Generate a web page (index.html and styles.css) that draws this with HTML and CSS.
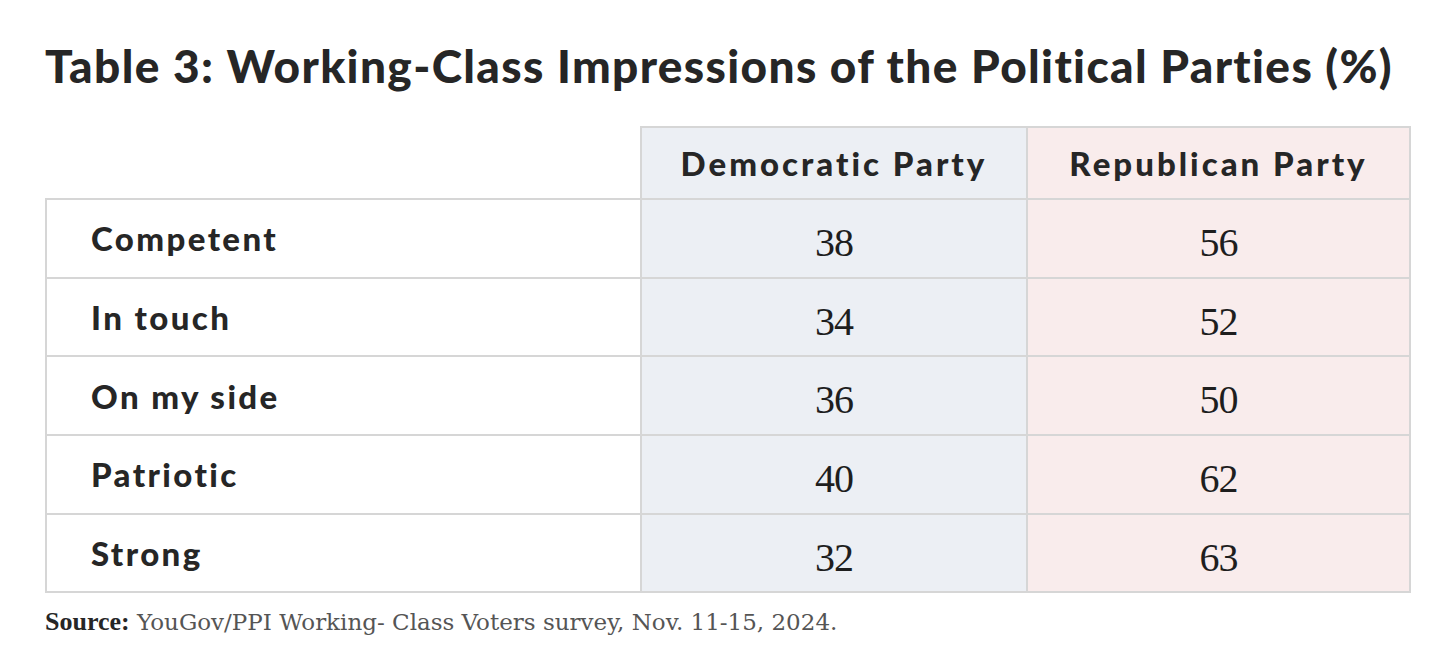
FILE: index.html
```html
<!DOCTYPE html>
<html lang="en">
<head>
<meta charset="utf-8">
<title>Table 3</title>
<link rel="stylesheet" href="styles.css">
</head>
<body>
<div class="page">
  <h1 class="title">Table 3: Working-Class Impressions of the Political Parties (%)</h1>
  <table class="data">
    <thead>
      <tr>
        <th class="blank"></th>
        <th class="dem">Democratic Party</th>
        <th class="rep">Republican Party</th>
      </tr>
    </thead>
    <tbody>
      <tr><th class="label">Competent</th><td class="dem">38</td><td class="rep">56</td></tr>
      <tr><th class="label">In touch</th><td class="dem">34</td><td class="rep">52</td></tr>
      <tr><th class="label">On my side</th><td class="dem">36</td><td class="rep">50</td></tr>
      <tr><th class="label">Patriotic</th><td class="dem">40</td><td class="rep">62</td></tr>
      <tr><th class="label">Strong</th><td class="dem">32</td><td class="rep">63</td></tr>
    </tbody>
  </table>
  <p class="source"><strong>Source:</strong> YouGov/PPI Working- Class Voters survey, Nov. 11-15, 2024.</p>
</div>
</body>
</html>
```
FILE: styles.css
```css
html, body {
  margin: 0;
  padding: 0;
  background: #ffffff;
}
.page {
  padding: 38px 45px 0 45px;
  color: #232323;
}
.title {
  margin: 0;
  font-family: Lato, "Open Sans", sans-serif;
  font-weight: 900;
  font-size: 46px;
  line-height: 56px;
  color: #262626;
  letter-spacing: 1.35px;
}
.data {
  margin-top: 32px;
  width: 1366px;
  border-collapse: collapse;
  table-layout: fixed;
}
.data th, .data td {
  border: 2px solid #d6d6d6;
  height: 76.7px;
  padding: 0;
}
.data thead th {
  height: 70px;
  font-family: Lato, "Open Sans", sans-serif;
  font-weight: 900;
  font-size: 33px;
  letter-spacing: 3px;
  color: #262626;
  text-align: center;
}
.data thead th.blank {
  border: none;
  width: 594px;
  background: #ffffff;
}
.data .dem {
  background: #eceff4;
  width: 384px;
}
.data .rep {
  background: #f9ecec;
}
.data th.label {
  text-align: left;
  padding-left: 44px;
  font-family: Lato, "Open Sans", sans-serif;
  font-weight: 900;
  font-size: 33px;
  letter-spacing: 2.4px;
  color: #262626;
}
.data td {
  text-align: center;
  font-family: "Liberation Serif", "DejaVu Serif", serif;
  font-size: 40px;
  letter-spacing: -1px;
  height: 68.7px;
  padding-top: 8px;
  color: #1e1e1e;
}
.source {
  margin: 14px 0 0 0;
  font-family: "DejaVu Serif", "Liberation Serif", serif;
  font-size: 23px;
  color: #555555;
}
.source strong {
  font-family: "Liberation Serif", serif;
  font-size: 26px;
  color: #262626;
}
```
